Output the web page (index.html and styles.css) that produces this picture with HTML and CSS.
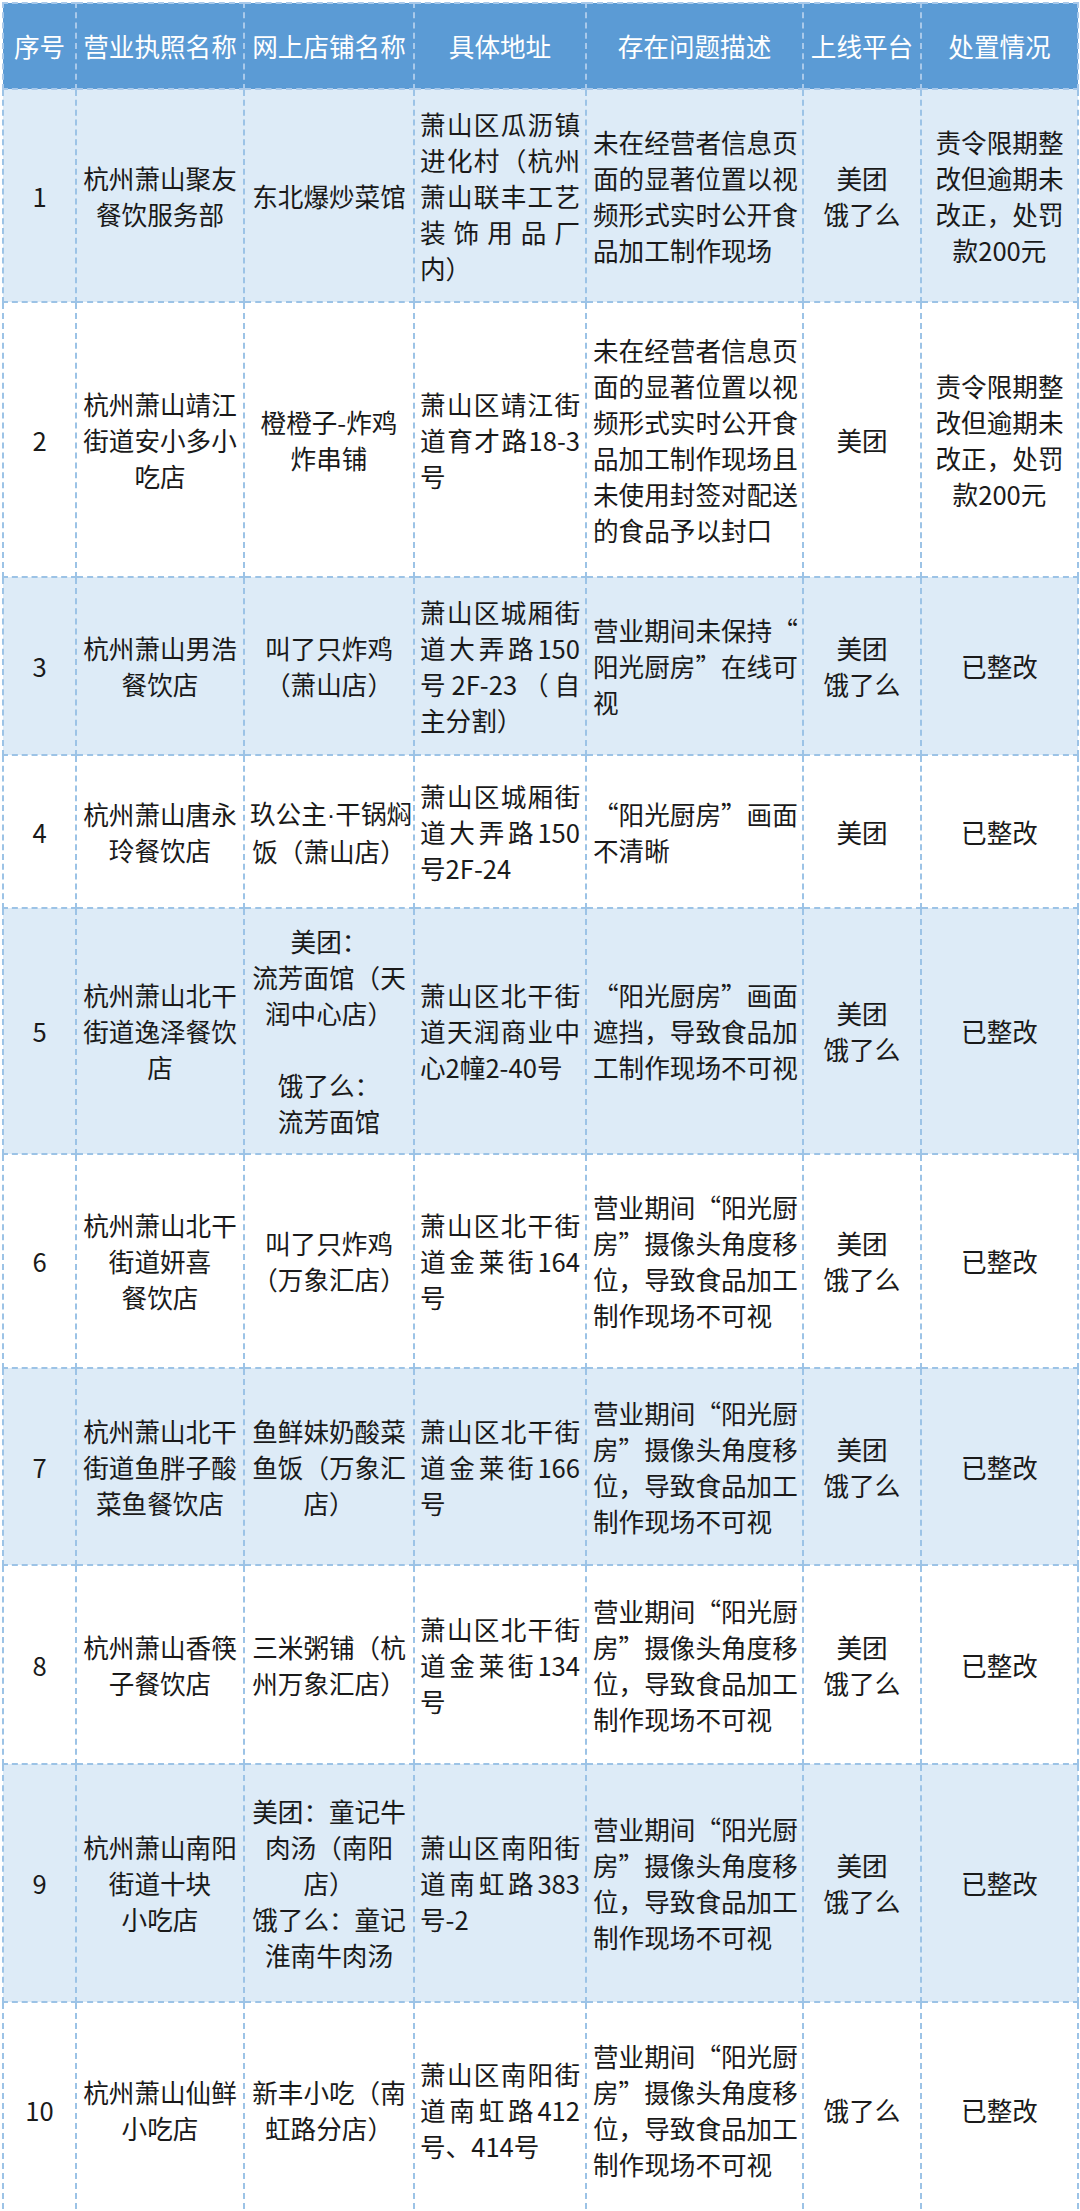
FILE: index.html
```html
<!DOCTYPE html>
<html lang="zh-CN">
<head>
<meta charset="utf-8">
<title>网络餐饮检查情况</title>
<link rel="stylesheet" href="styles.css">
</head>
<body>
<table class="grid">
  <colgroup>
    <col class="c-no"><col class="c-lic"><col class="c-shop"><col class="c-addr"><col class="c-desc"><col class="c-plat"><col class="c-res">
  </colgroup>
  <thead>
    <tr class="hd">
      <th>序号</th><th>营业执照名称</th><th>网上店铺名称</th><th>具体地址</th><th>存在问题描述</th><th>上线平台</th><th>处置情况</th>
    </tr>
  </thead>
  <tbody>
    <tr class="odd h1">
      <td>1</td>
      <td>杭州萧山聚友<br>餐饮服务部</td>
      <td>东北爆炒菜馆</td>
      <td class="addr"><span>萧山区瓜沥镇</span><span>进化村（杭州</span><span>萧山联丰工艺</span><span>装饰用品厂</span><span class="last">内）</span></td>
      <td class="desc">未在经营者信息页<br>面的显著位置以视<br>频形式实时公开食<br>品加工制作现场</td>
      <td>美团<br>饿了么</td>
      <td>责令限期整<br>改但逾期未<br>改正，处罚<br>款200元</td>
    </tr>
    <tr class="h2">
      <td>2</td>
      <td>杭州萧山靖江<br>街道安小多小<br>吃店</td>
      <td>橙橙子-炸鸡<br>炸串铺</td>
      <td class="addr"><span>萧山区靖江街</span><span>道育才路18-3</span><span class="last">号</span></td>
      <td class="desc">未在经营者信息页<br>面的显著位置以视<br>频形式实时公开食<br>品加工制作现场且<br>未使用封签对配送<br>的食品予以封口</td>
      <td>美团</td>
      <td>责令限期整<br>改但逾期未<br>改正，处罚<br>款200元</td>
    </tr>
    <tr class="odd h3">
      <td>3</td>
      <td>杭州萧山男浩<br>餐饮店</td>
      <td>叫了只炸鸡<br>（萧山店）</td>
      <td class="addr"><span>萧山区城厢街</span><span>道大弄路150</span><span>号2F-23（自</span><span class="last">主分割）</span></td>
      <td class="desc">营业期间未保持“<br>阳光厨房”在线可<br>视</td>
      <td>美团<br>饿了么</td>
      <td>已整改</td>
    </tr>
    <tr class="h4">
      <td>4</td>
      <td>杭州萧山唐永<br>玲餐饮店</td>
      <td>玖公主<span class="dot">·</span>干锅焖<br>饭（萧山店）</td>
      <td class="addr"><span>萧山区城厢街</span><span>道大弄路150</span><span class="last">号2F-24</span></td>
      <td class="desc">“阳光厨房”画面<br>不清晰</td>
      <td>美团</td>
      <td>已整改</td>
    </tr>
    <tr class="odd h5">
      <td>5</td>
      <td>杭州萧山北干<br>街道逸泽餐饮<br>店</td>
      <td>美团<span class="punct">：</span><br>流芳面馆（天<br>润中心店）<br><br>饿了么<span class="punct">：</span><br>流芳面馆</td>
      <td class="addr"><span>萧山区北干街</span><span>道天润商业中</span><span class="last">心2幢2-40号</span></td>
      <td class="desc">“阳光厨房”画面<br>遮挡，导致食品加<br>工制作现场不可视</td>
      <td>美团<br>饿了么</td>
      <td>已整改</td>
    </tr>
    <tr class="h6">
      <td>6</td>
      <td>杭州萧山北干<br>街道妍喜<br>餐饮店</td>
      <td>叫了只炸鸡<br>（万象汇店）</td>
      <td class="addr"><span>萧山区北干街</span><span>道金莱街164</span><span class="last">号</span></td>
      <td class="desc">营业期间“阳光厨<br>房”摄像头角度移<br>位，导致食品加工<br>制作现场不可视</td>
      <td>美团<br>饿了么</td>
      <td>已整改</td>
    </tr>
    <tr class="odd h7">
      <td>7</td>
      <td>杭州萧山北干<br>街道鱼胖子酸<br>菜鱼餐饮店</td>
      <td>鱼鲜妹奶酸菜<br>鱼饭（万象汇<br>店）</td>
      <td class="addr"><span>萧山区北干街</span><span>道金莱街166</span><span class="last">号</span></td>
      <td class="desc">营业期间“阳光厨<br>房”摄像头角度移<br>位，导致食品加工<br>制作现场不可视</td>
      <td>美团<br>饿了么</td>
      <td>已整改</td>
    </tr>
    <tr class="h8">
      <td>8</td>
      <td>杭州萧山香筷<br>子餐饮店</td>
      <td>三米粥铺（杭<br>州万象汇店）</td>
      <td class="addr"><span>萧山区北干街</span><span>道金莱街134</span><span class="last">号</span></td>
      <td class="desc">营业期间“阳光厨<br>房”摄像头角度移<br>位，导致食品加工<br>制作现场不可视</td>
      <td>美团<br>饿了么</td>
      <td>已整改</td>
    </tr>
    <tr class="odd h9">
      <td>9</td>
      <td>杭州萧山南阳<br>街道十块<br>小吃店</td>
      <td>美团<span class="punct">：</span>童记牛<br>肉汤（南阳<br>店）<br>饿了么<span class="punct">：</span>童记<br>淮南牛肉汤</td>
      <td class="addr"><span>萧山区南阳街</span><span>道南虹路383</span><span class="last">号-2</span></td>
      <td class="desc">营业期间“阳光厨<br>房”摄像头角度移<br>位，导致食品加工<br>制作现场不可视</td>
      <td>美团<br>饿了么</td>
      <td>已整改</td>
    </tr>
    <tr class="h10">
      <td>10</td>
      <td>杭州萧山仙鲜<br>小吃店</td>
      <td>新丰小吃（南<br>虹路分店）</td>
      <td class="addr"><span>萧山区南阳街</span><span>道南虹路412</span><span class="last">号、414号</span></td>
      <td class="desc">营业期间“阳光厨<br>房”摄像头角度移<br>位，导致食品加工<br>制作现场不可视</td>
      <td>饿了么</td>
      <td>已整改</td>
    </tr>
  </tbody>
</table>
</body>
</html>
```

FILE: styles.css
```css
html, body {
  margin: 0;
  padding: 0;
  background: #ffffff;
}

body {
  padding: 2px 0 0 2px;
  font-family: "Noto Sans CJK SC", "Noto Sans", sans-serif;
  font-size: 25.6px;
  line-height: 36px;
  color: #1a1a1a;
}

.grid {
  border-collapse: collapse;
  table-layout: fixed;
  width: 1075px;
}

.c-no { width: 73px; }
.c-lic { width: 168px; }
.c-shop { width: 170px; }
.c-addr { width: 172px; }
.c-desc { width: 217px; }
.c-plat { width: 118px; }
.c-res { width: 157px; }

.grid th,
.grid td {
  border: 2px dashed #9cc3e6;
  padding: 0 5px;
  text-align: center;
  vertical-align: middle;
  white-space: nowrap;
  font-weight: 400;
  text-spacing-trim: space-all;
}

.grid th {
  background: #5b9bd5;
  color: #ffffff;
  border-color: #a9c9ea;
}

.odd td {
  background: #ddebf7;
}

.grid td.desc {
  text-align: left;
  padding: 0 5px 0 6px;
}

.grid td.addr {
  text-align: left;
}

.addr span {
  display: block;
  text-align: justify;
  text-align-last: justify;
}

.addr span.last {
  text-align-last: left;
}

.dot {
  font-family: "Liberation Sans", sans-serif;
}

.punct {
  font-family: "Noto Sans CJK TC", "Noto Sans CJK SC", sans-serif;
}

.hd { height: 86px; }
.h1 { height: 213px; }
.h2 { height: 275px; }
.h3 { height: 178px; }
.h4 { height: 153px; }
.h5 { height: 246px; }
.h6 { height: 214px; }
.h7 { height: 197px; }
.h8 { height: 199px; }
.h9 { height: 238px; }
.h10 { height: 216px; }
```
